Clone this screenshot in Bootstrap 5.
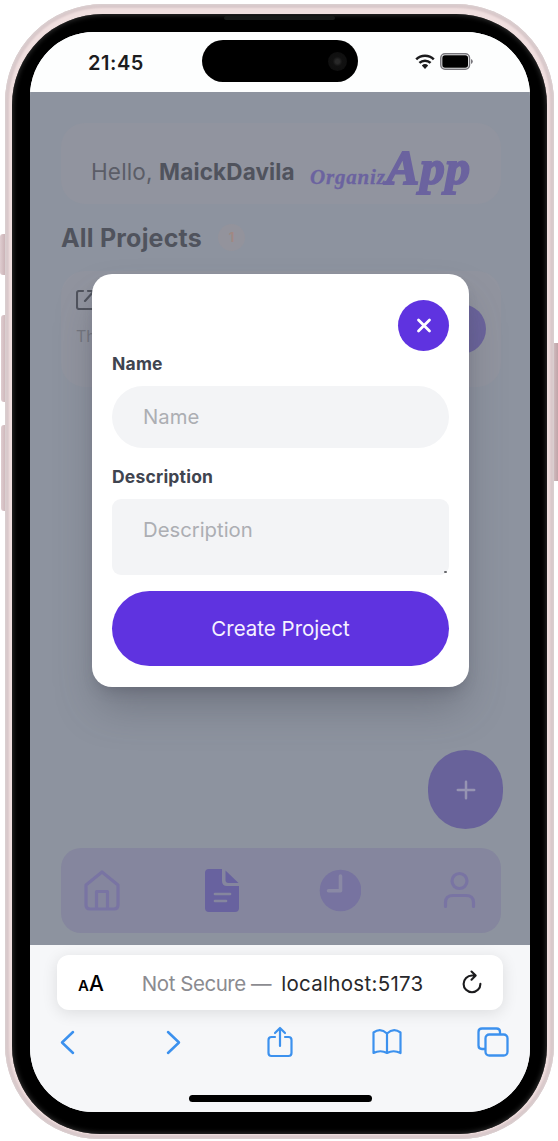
<!DOCTYPE html>
<html lang="en">
<head>
<meta charset="utf-8">
<meta name="viewport" content="width=device-width, initial-scale=1">
<title>OrganizApp</title>
<link href="https://cdn.jsdelivr.net/npm/bootstrap@5.3.0/dist/css/bootstrap.min.css" rel="stylesheet">
<style>
  body { font-family: Inter, "Liberation Sans", sans-serif; background: #fff; width: 558px; height: 1141px; overflow: hidden; line-height: 1.2; }
  svg { display: block; flex: none; }
  /* device shell */
  .phone { margin: 4px 0 0 5px; width: 549px; height: 1135px; padding: 10px 7px 5px; border-radius: 98px 98px 94px 94px;
    background: #f0dfdf; box-shadow: inset 0 0 2px 1px #d9d0d1, inset 0 0 2px 4px #d9c8ca; }
  .bezel { height: 100%; padding: 18px 17px 22px 18px; background: #000; border-radius: 91px 91px 88px 88px; box-shadow: inset 0 0 5px 1px #303030; }
  .side-key { position: absolute; background: linear-gradient(90deg, #dfcdd0, #bfa4a8); border-radius: 3px 0 0 3px; z-index: -1; }
  .earpiece { position: absolute; top: 16px; left: 224px; width: 111px; height: 4px; border-radius: 3px; background: #171918; }
  .screen { height: 1080px; border-radius: 64px; background: #f6f7f9; }
  .status { height: 60px; background: #fdfefe; }
  .clock { font-size: 20px; font-weight: 600; letter-spacing: .55px; margin: 1px 0 0 58px; width: 114px; color: #1c1c1e; }
  .island { width: 156px; height: 42px; border-radius: 21px; background: #000; margin-top: -2px; padding-right: 11px; }
  .lens { width: 19px; height: 19px; border-radius: 50%; background: radial-gradient(#282828 0 15%, #111 35%, #0d0d0d); }
  /* page behind the dialog */
  .page { height: 853px; background: #8d939f; padding: 31px 29px 0 31px; color: #50535d; }
  .panel { background: #91949f; border-radius: 24px; }
  .hero { height: 81px; padding: 16px 31px 0 30px; }
  .hello { font-size: 22.5px; letter-spacing: .15px; white-space: nowrap; color: #5b5d67; }
  .hello b { font-weight: 700; color: #50535d; }
  .logo { font-family: "Liberation Serif", serif; font-weight: 700; font-style: italic; color: #6b639f; white-space: nowrap; line-height: 1; margin-top: -9px; }
  .logo-a { font-size: 21px; letter-spacing: .8px; -webkit-text-stroke: .3px; }
  .logo-b { font-size: 49px; -webkit-text-stroke: 2px; letter-spacing: .9px; margin: 0 -1px 0 1px; }
  .heading { height: 67px; }
  .heading h1 { font-size: 25px; font-weight: 700; letter-spacing: .2px; margin: 0; width: 141px; white-space: nowrap; }
  .count { width: 27px; height: 27px; border-radius: 50%; background: #93939c; color: #a08883; font-size: 13px; font-weight: 700; }
  .project { height: 116px; padding: 19px 15px 0; }
  .project p { font-size: 16px; color: #74767f; margin: 17px 0 0; }
  .open-dot { width: 50px; height: 50px; border-radius: 50%; background: #6a639c; margin-top: 14px; }
  .fab { width: 75px; height: 79px; border-radius: 38px; background: #68629a; margin: 363px -2px 19px auto; }
  .tabs-nav { height: 85px; border-radius: 20px; background: #85869e; padding: 0 23px 0 19px; }
  /* dialog */
  .dialog { position: absolute; left: 62px; top: 242px; width: 377px; height: 412.5px; border-radius: 20px; background: #fff; padding: 26px 20px 20px;
    box-shadow: 0 24px 42px -6px rgba(70,72,85,.4), 0 8px 14px -6px rgba(70,72,85,.35); }
  .close-x { width: 51px; height: 51px; border-radius: 50%; background: #5f33e0; border: 0; }
  .dialog label { font-size: 17.5px; font-weight: 700; letter-spacing: .2px; color: #40444f; line-height: 22px; }
  .dialog .form-control { border: 0; background: #f3f4f6; font-size: 20.3px; padding: 0 31px; }
  .dialog .form-control::placeholder { color: #acaeb3; opacity: 1; }
  .dialog input.form-control { height: 62px; border-radius: 31px; padding-bottom: 2px; }
  .dialog textarea.form-control { height: 76px; min-height: 0; border-radius: 9px; padding-top: 18px; line-height: 25px; resize: none; overflow: hidden; }
  .grip { position: absolute; right: 2px; bottom: 2px; width: 3px; height: 2px; background: #66676b; border-radius: 1px; }
  .create { height: 75px; border-radius: 38px; background: #5f33e0; color: #f6f2ff; font-size: 20.5px; border: 0; padding: 1px 0 0; }
  /* browser chrome */
  .chrome { height: 167px; padding: 10px 27px 0; background: #f6f7f9; }
  .address { height: 55px; border-radius: 12px; background: #fff; box-shadow: 0 3px 16px rgba(0,0,0,.11); padding: 3px 21px 0; font-size: 20.5px; white-space: nowrap; color: #28282b; }
  .address .small-a { font-size: 15px; font-weight: 600; } .address .big-a { font-size: 21px; font-weight: 500; }
  .address .warn { color: #8b8b90; margin-left: 38px; letter-spacing: -.45px; }
  .address .host { margin-left: 10px; letter-spacing: .3px; }
  .tools { height: 64px; margin: 0 -11px 0 -11px; color: #3c91ee; }
  .tool { width: 42px; }
  .home-bar { width: 183px; height: 7px; border-radius: 4px; background: #000; margin: 21px auto 0; }
</style>
</head>
<body class="position-relative">
<span class="side-key" style="left:0;top:234px;width:8px;height:41px"></span>
<span class="side-key" style="left:1px;top:315px;width:8px;height:87px"></span>
<span class="side-key" style="left:1px;top:425px;width:8px;height:86px"></span>
<span class="side-key" style="left:550px;top:343px;width:8px;height:138px"></span>
<div class="overflow-hidden">
<div class="phone">
 <div class="bezel">
  <span class="earpiece"></span>
  <div class="screen overflow-hidden position-relative">
   <div class="status d-flex align-items-center">
    <span class="clock">21:45</span>
    <div class="island d-flex align-items-center justify-content-end"><span class="lens"></span></div>
    <svg class="ms-auto" width="20" height="16" viewBox="0 0 20 16" fill="none" stroke="#1b1b1d" stroke-width="2.5"><path d="M1.2 5.4a12.7 12.7 0 0 1 17.6 0M4.4 8.9a8.2 8.2 0 0 1 11.2 0"/><path d="M6.8 11.5a4.7 4.7 0 0 1 6.4 0L10 14.9z" fill="#1b1b1d" stroke="none"/></svg>
    <svg style="margin:-2px 57px 0 5px" width="33" height="17" viewBox="0 0 33 17"><rect x=".8" y=".8" width="28.7" height="15.4" rx="4.2" fill="none" stroke="#77757b" stroke-width="1.5"/><rect x="2.3" y="2.3" width="25.7" height="12.4" rx="2.6"/><path d="M31 6v5q1.8-.8 1.8-2.5T31 6" fill="#77757b"/></svg>
   </div>

   <main class="page">
    <header class="panel hero d-flex align-items-center justify-content-between">
     <span class="hello">Hello, <b>MaickDavila</b></span>
     <span class="logo d-flex align-items-baseline"><span class="logo-a">Organiz</span><span class="logo-b">App</span></span>
    </header>
    <div class="heading d-flex align-items-center">
     <h1>All Projects</h1><span class="count d-flex align-items-center justify-content-center ms-3">1</span>
    </div>
    <section class="panel project d-flex justify-content-between">
     <div>
      <svg width="20" height="20" viewBox="0 0 20 20" fill="none" stroke="#50535d" stroke-width="2.1" stroke-linecap="round" stroke-linejoin="round"><path d="M7 1H3a2 2 0 0 0-2 2v14a2 2 0 0 0 2 2h14M9 11l9-10M12 1h7"/></svg>
      <p>The</p>
     </div>
     <span class="open-dot"></span>
    </section>
    <div class="fab d-flex align-items-center justify-content-center">
     <svg width="20" height="20" viewBox="0 0 20 20" stroke="#9694b2" stroke-width="2.5" stroke-linecap="round"><path d="M10 1.8v16.4M1.8 10h16.4"/></svg>
    </div>
    <nav class="tabs-nav d-flex align-items-center justify-content-between">
     <svg width="44" height="46" viewBox="0 0 44 46" fill="none" stroke="#7974a3" stroke-width="3.2" stroke-linejoin="round"><path d="M22 4 38 17v20q0 4-4 4H10q-4 0-4-4V17z"/><path d="M16.5 41V23.5h11V41"/></svg>
     <svg width="36" height="44" viewBox="0 0 36 44"><path d="M5 0h13v12q0 5 5 5h12v22q0 4-4 4H5q-4 0-4-4V4q0-4 4-4" fill="#68629f"/><path d="M21.5 1.5 34.5 14h-10q-3 0-3-3z" fill="#68629f"/><path d="M11 25h15M11 32h11" stroke="#85869e" stroke-width="2.7" stroke-linecap="round"/></svg>
     <svg width="42" height="46" viewBox="-1 0 42 46"><circle cx="20.5" cy="22.5" r="20.8" fill="#7773a0"/><path d="M20.5 8v14.700H8.500" fill="none" stroke="#8a89a5" stroke-width="3.600" stroke-linecap="round" stroke-linejoin="round"/></svg>
     <svg width="37" height="46" viewBox="0 0 37 46" fill="none" stroke="#7974a3" stroke-width="3.2" stroke-linecap="round"><circle cx="18.5" cy="13" r="7.5"/><path d="M4.5 38.5v-4q0-7 7.500-7h13q7.500 0 7.500 7v4"/></svg>
    </nav>
   </main>

   <form class="dialog">
    <button type="button" class="close-x d-flex align-items-center justify-content-center ms-auto" aria-label="Close">
     <svg width="16" height="16" viewBox="0 0 16 16" stroke="#fff" stroke-width="2.8" stroke-linecap="round"><path d="m2.500 2 11 11m0-11-11 11"/></svg>
    </button>
    <label class="d-block" for="name" style="margin:2px 0 11px">Name</label>
    <input id="name" class="form-control" placeholder="Name">
    <label class="d-block" for="desc" style="margin:18px 0 11px">Description</label>
    <div class="position-relative"><textarea id="desc" class="form-control" placeholder="Description"></textarea><span class="grip"></span></div>
    <button type="button" class="create w-100 d-block" style="margin-top:16px">Create Project</button>
   </form>

   <footer class="chrome">
    <div class="address d-flex align-items-center">
     <span class="d-flex align-items-baseline text-black"><span class="small-a">A</span><span class="big-a">A</span></span>
     <span class="warn">Not Secure —</span><span class="host">localhost:5173</span>
     <svg class="ms-auto" style="margin-top:-5px" width="20" height="24" viewBox="0 0 20 24" fill="none" stroke="#1b1b1d" stroke-width="2.1" stroke-linecap="round" stroke-linejoin="round"><path d="M12.5 5.500H10a8.400 8.400 0 1 0 8.400 8.400M9.500 1.500l4.200 4-4.200 4.200"/></svg>
    </div>
    <div class="tools d-flex align-items-center justify-content-between">
     <span class="tool d-flex justify-content-center"><svg width="15" height="25" viewBox="0 0 15 25" fill="none" stroke="currentColor" stroke-width="2.5" stroke-linecap="round" stroke-linejoin="round"><path d="M13 2 2 12.500 13 23"/></svg></span>
     <span class="tool d-flex justify-content-center"><svg width="15" height="25" viewBox="0 0 15 25" fill="none" stroke="currentColor" stroke-width="2.5" stroke-linecap="round" stroke-linejoin="round"><path d="m2 2 11 10.500L2 23"/></svg></span>
     <span class="tool d-flex justify-content-center"><svg width="26" height="32" viewBox="0 0 26 32" fill="none" stroke="currentColor" stroke-width="2.2" stroke-linecap="round" stroke-linejoin="round"><path d="M8 11H4.500Q1.500 11 1.500 14v13q0 3 3 3h17q3 0 3-3V14q0-3-3-3H18M13 20V2M8 7l5-5 5 5"/></svg></span>
     <span class="tool d-flex justify-content-center"><svg width="30" height="26" viewBox="0 0 30 26" fill="none" stroke="currentColor" stroke-width="2.2" stroke-linejoin="round"><path d="M15 4.500Q8.500-1.500 1.500 3.500V24q7-3.500 13.500 0 6.500-3.500 13.500 0V3.500Q21.500-1.500 15 4.500zM15 4.500V24"/></svg></span>
     <span class="tool d-flex justify-content-center"><svg width="32" height="30" viewBox="0 0 32 30" fill="none" stroke="currentColor" stroke-width="2.3"><path d="M8.500 22H5q-3.500 0-3.500-3.500V5Q1.500 1.500 5 1.500h14.500Q23 1.500 23 5v2.500"/><rect x="8.500" y="7.500" width="22" height="21" rx="3.800"/></svg></span>
    </div>
    <div class="home-bar"></div>
   </footer>
  </div>
 </div>
</div>
</div>
<script src="https://cdn.jsdelivr.net/npm/bootstrap@5.3.0/dist/js/bootstrap.bundle.min.js"></script>
</body>
</html>
